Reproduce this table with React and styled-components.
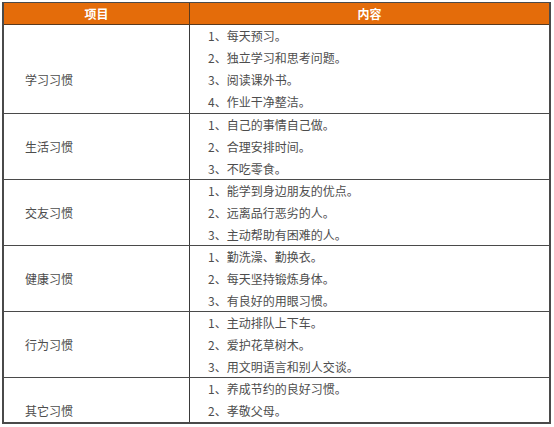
import React from 'react';
import styled, { createGlobalStyle } from 'styled-components';

const GlobalStyle = createGlobalStyle`
	body {
		margin: 0;
		background: #ffffff;
		font-family: "Noto Sans CJK SC", "Microsoft YaHei", sans-serif;
	}
`;

const Table = styled.div`
	margin: 2px 0 0 2px;
	width: 549px;
	border: 1px solid #4a4a4a;
	border-left-width: 2px;
	border-right-width: 2px;
	border-bottom-width: 2px;
	box-sizing: border-box;
`;

const HeaderRow = styled.div`
	display: grid;
	grid-template-columns: 186px 1fr;
	height: 21px;
	background: #e46c0a;
	border-bottom: 1px solid #5a3a1e;
`;

const HeaderCell = styled.div`
	display: flex;
	align-items: center;
	justify-content: center;
	color: #ffffff;
	font-size: 12px;
	font-weight: bold;
	border-right: ${(p) => (p.last ? 'none' : '1px solid #5a3a1e')};
`;

const Row = styled.div`
	display: grid;
	grid-template-columns: 186px 1fr;
	border-top: ${(p) => (p.first ? 'none' : '1px solid #4a4a4a')};
`;

const LabelCell = styled.div`
	border-right: 1px solid #3a3a3a;
	padding-left: 21px;
	padding-top: ${(p) => p.line * 22}px;
	font-size: 12px;
	line-height: 22px;
	color: #4d4d4d;
`;

const ItemList = styled.div`
	display: flex;
	flex-direction: column;
	padding-left: 18px;
	margin-bottom: ${(p) => (p.tall ? 0 : -1)}px;
`;

const Item = styled.div`
	font-size: 12px;
	line-height: 22px;
	color: #4d4d4d;
	white-space: nowrap;
`;

const habits = [
	{ name: '学习习惯', line: 2, items: ['每天预习。', '独立学习和思考问题。', '阅读课外书。', '作业干净整洁。'] },
	{ name: '生活习惯', line: 1, items: ['自己的事情自己做。', '合理安排时间。', '不吃零食。'] },
	{ name: '交友习惯', line: 1, items: ['能学到身边朋友的优点。', '远离品行恶劣的人。', '主动帮助有困难的人。'] },
	{ name: '健康习惯', line: 1, items: ['勤洗澡、勤换衣。', '每天坚持锻炼身体。', '有良好的用眼习惯。'] },
	{ name: '行为习惯', line: 1, items: ['主动排队上下车。', '爱护花草树木。', '用文明语言和别人交谈。'] },
	{ name: '其它习惯', line: 1, items: ['养成节约的良好习惯。', '孝敬父母。'] },
];

const App = () => {
	return (
		<>
			<GlobalStyle />
			<Table>
				<HeaderRow>
					<HeaderCell>项目</HeaderCell>
					<HeaderCell last>内容</HeaderCell>
				</HeaderRow>
				{habits.map((h, i) => (
					<Row key={h.name} first={i === 0}>
						<LabelCell line={h.line}>{h.name}</LabelCell>
						<ItemList tall={i === 0}>
							{h.items.map((text, j) => (
								<Item key={j}>{`${j + 1}、${text}`}</Item>
							))}
						</ItemList>
					</Row>
				))}
			</Table>
		</>
	);
};

export default App;
